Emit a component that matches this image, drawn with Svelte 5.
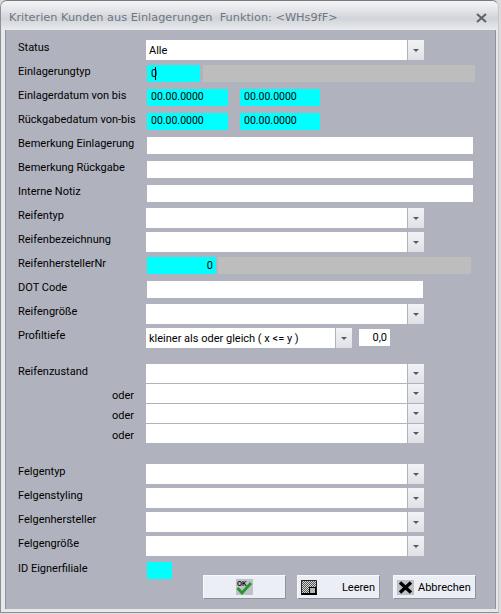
<script>
  const dateFrom = "00.00.0000";

  const top = ["Bemerkung Einlagerung", "Bemerkung Rückgabe", "Interne Notiz"];
  const felgen = ["Felgentyp", "Felgenstyling", "Felgenhersteller", "Felgengröße"];
</script>

<style>
  :global(body) {
    margin: 0;
    background: #dcdcde;
  }

  .window {
    width: 499px;
    height: 613px;
    box-sizing: border-box;
    border-top: 1px solid #77797d;
    border-left: 1px solid #8d8f94;
    border-right: 1px solid #c4c6cb;
    border-bottom: 1px solid #8d8f94;
    border-radius: 7px 7px 0 0;
    background: #e6e8eb;
    font-family: Roboto, "Liberation Sans", Arial, sans-serif;
    font-size: 11px;
    color: #000;
    overflow: hidden;
  }

  .titlebar {
    display: flex;
    align-items: center;
    justify-content: space-between;
    height: 29px;
    padding: 4px 9px 0 8px;
    box-sizing: border-box;
    background: linear-gradient(#f3f4f6, #e4e6ea 30%, #d0d3d9 60%, #e8eaed);
    color: #6f7680;
    font-family: "DejaVu Sans", sans-serif;
    font-size: 11.3px;
    white-space: pre;
  }

  .close {
    margin-right: 2px;
    width: 11px;
    height: 10px;
  }

  .body {
    height: 579px;
    margin: 0 2px 0 4px;
    box-sizing: border-box;
    padding: 11px 0 0 12px;
    background: #b0b3bd;
    border-left: 1px solid #8f929b;
    border-right: 1px solid #8f929b;
  }

  .row {
    display: flex;
    align-items: flex-start;
    height: 24px;
  }

  .row.tight {
    height: 20px;
  }

  .row.last {
    height: 14px;
    margin-top: 1px;
  }

  .gap {
    margin-top: 12px;
  }

  .gap-large {
    margin-top: 20px;
  }

  .label {
    flex: none;
    width: 129px;
    line-height: 13px;
  }

  .oder {
    text-align: right;
    box-sizing: border-box;
    padding-right: 13px;
    margin-top: 4px;
  }

  .combo {
    display: flex;
    width: 278px;
    height: 20px;
    margin: -1px 0 0 -1px;
    flex: none;
    background: #fff;
    line-height: 21px;
  }

  .combo.tight {
    height: 19px;
    margin-bottom: 1px;
  }

  .combo.short {
    width: 206px;
  }

  .combo .text {
    flex: 1;
    padding-left: 3px;
    white-space: nowrap;
    overflow: hidden;
  }

  .arrow {
    flex: none;
    width: 16px;
    display: flex;
    align-items: center;
    justify-content: center;
    border-left: 1px solid #b0b3bd;
    background: linear-gradient(#f1f2f5, #dfe1e6);
  }

  .arrow i {
    width: 0;
    height: 0;
    border-left: 3px solid transparent;
    border-right: 3px solid transparent;
    border-top: 3px solid #55585e;
  }

  .field {
    height: 17px;
    line-height: 17px;
    box-sizing: border-box;
    flex: none;
    background: #fff;
    padding: 0 3px;
  }

  .cyan {
    background: #00ffff;
    border-radius: 1px;
  }

  .date {
    width: 81px;
    padding-left: 4px;
    font-size: 10.5px;
    line-height: 15px;
  }

  .date + .date {
    margin-left: 12px;
    width: 80px;
  }

  .grey {
    background: #bdbdbd;
  }

  .wide {
    width: 326px;
  }

  .dot {
    width: 276px;
  }

  .num {
    text-align: right;
  }

  .type-id {
    width: 53px;
    padding-left: 4px;
  }

  .caret {
    border-left: 1px solid #000;
    margin-left: -2px;
  }

  .type-name {
    width: 272px;
    margin-left: 3px;
  }

  .maker-id {
    width: 69px;
  }

  .maker-name {
    width: 253px;
    margin-left: 2px;
  }

  .branch {
    width: 25px;
  }

  .depth {
    width: 31px;
    margin-left: 7px;
    padding-right: 3px;
  }

  .footer {
    display: flex;
    gap: 11px;
    margin-top: -1px;
    padding-left: 185px;
  }

  button {
    display: flex;
    align-items: center;
    justify-content: center;
    width: 83px;
    height: 24px;
    padding: 0 3px;
    box-sizing: border-box;
    border: 1px solid;
    border-color: #f8f9fb #8f929b #8f929b #f8f9fb;
    background: #eceef6;
    font: inherit;
    color: #000;
  }

  button svg {
    flex: none;
  }

  .spread {
    justify-content: space-between;
    padding: 0 4px 0 3px;
  }

  .cancel {
    margin-left: 2px;
    justify-content: flex-start;
    padding-left: 3px;
    gap: 4px;
  }
</style>

<div class="window">
  <div class="titlebar">
    <span>Kriterien Kunden aus Einlagerungen  Funktion: &lt;WHs9fF&gt;</span>
    <svg class="close" viewBox="0 0 11 10"><path d="M1 1l9 8M10 1L1 9" stroke="#5d6268" stroke-width="2" fill="none" /></svg>
  </div>

  <div class="body">
    <div class="row">
      <div class="label">Status</div>
      <div class="combo"><div class="text">Alle</div><div class="arrow"><i></i></div></div>
    </div>
    <div class="row">
      <div class="label">Einlagerungtyp</div>
      <div class="field cyan type-id">0<span class="caret"></span></div>
      <div class="field grey type-name"></div>
    </div>
    <div class="row">
      <div class="label">Einlagerdatum von bis</div>
      <div class="field cyan date">{dateFrom}</div>
      <div class="field cyan date">{dateFrom}</div>
    </div>
    <div class="row">
      <div class="label">Rückgabedatum von-bis</div>
      <div class="field cyan date">{dateFrom}</div>
      <div class="field cyan date">{dateFrom}</div>
    </div>
    {#each top as label}
      <div class="row">
        <div class="label">{label}</div>
        <div class="field wide"></div>
      </div>
    {/each}
    <div class="row">
      <div class="label">Reifentyp</div>
      <div class="combo"><div class="text"></div><div class="arrow"><i></i></div></div>
    </div>
    <div class="row">
      <div class="label">Reifenbezeichnung</div>
      <div class="combo"><div class="text"></div><div class="arrow"><i></i></div></div>
    </div>
    <div class="row">
      <div class="label">ReifenherstellerNr</div>
      <div class="field cyan num maker-id">0</div>
      <div class="field grey maker-name"></div>
    </div>
    <div class="row">
      <div class="label">DOT Code</div>
      <div class="field dot"></div>
    </div>
    <div class="row">
      <div class="label">Reifengröße</div>
      <div class="combo"><div class="text"></div><div class="arrow"><i></i></div></div>
    </div>
    <div class="row">
      <div class="label">Profiltiefe</div>
      <div class="combo short"><div class="text">kleiner als oder gleich ( x &lt;= y )</div><div class="arrow"><i></i></div></div>
      <div class="field num depth">0,0</div>
    </div>

    <div class="row tight gap">
      <div class="label">Reifenzustand</div>
      <div class="combo tight"><div class="text"></div><div class="arrow"><i></i></div></div>
    </div>
    {#each [1, 2, 3] as n}
      <div class="row tight">
        <div class="label oder">oder</div>
        <div class="combo tight"><div class="text"></div><div class="arrow"><i></i></div></div>
      </div>
    {/each}

    <div class="gap-large"></div>
    {#each felgen as name}
      <div class="row">
        <div class="label">{name}</div>
        <div class="combo"><div class="text"></div><div class="arrow"><i></i></div></div>
      </div>
    {/each}

    <div class="row last">
      <div class="label">ID Eignerfiliale</div>
      <div class="field cyan branch"></div>
    </div>

    <div class="footer">
      <button>
        <svg width="17" height="16" viewBox="0 0 17 16">
          <rect width="17" height="16" fill="#bfc1c6" />
          <text x="1" y="6.5" font-size="6.5" font-family="Liberation Sans" font-weight="700" fill="#000">OK</text>
          <path d="M1.5 9l4.5 5L15 4" stroke="#23982f" stroke-width="2.8" fill="none" />
        </svg>
      </button>
      <button class="spread">
        <svg width="16" height="15" viewBox="0 0 16 15">
          <defs>
            <pattern id="dither" width="2" height="2" patternUnits="userSpaceOnUse">
              <rect width="2" height="2" fill="#d8d8d8" />
              <rect width="1" height="1" fill="#555" />
              <rect x="1" y="1" width="1" height="1" fill="#555" />
            </pattern>
          </defs>
          <rect x="0" y="0" width="16" height="15" fill="url(#dither)" />
          <path d="M0.5 15V0.5H15.5V15" stroke="#222" fill="none" />
          <rect x="0" y="13" width="16" height="2" fill="#000" />
          <rect x="8.5" y="7.5" width="6" height="6" fill="#b5b5b5" stroke="#000" />
        </svg>
        <span>Leeren</span>
      </button>
      <button class="cancel">
        <svg width="17" height="15" viewBox="0 0 17 15">
          <rect width="17" height="15" fill="#bfc1c6" />
          <path d="M3 2.5l11 10M14 2.5L3 12.5" stroke="#000" stroke-width="3.4" fill="none" />
        </svg>
        <span>Abbrechen</span>
      </button>
    </div>
  </div>
</div>
